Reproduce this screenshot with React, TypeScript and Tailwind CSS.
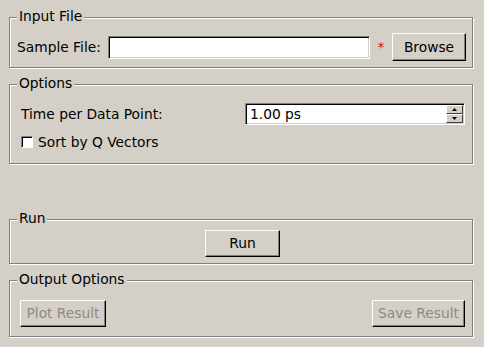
import type { ReactNode } from "react";

// etched group box, title sits on the top line
function Group({
  title,
  className,
  children,
}: {
  title: string;
  className?: string;
  children: ReactNode;
}) {
  return (
    <div
      className={
        "relative w-[464px] border border-[#808080] shadow-[inset_1px_1px_0_#fff,1px_1px_0_#fff] " +
        (className ?? "")
      }
    >
      <span className="absolute left-[7px] top-[-9px] bg-[#d4d0c8] px-[2px] leading-[15px]">
        {title}
      </span>
      {children}
    </div>
  );
}

function Btn({
  label,
  width,
  height = "h-[27px]",
  disabled,
}: {
  label: string;
  width: string;
  height?: string;
  disabled?: boolean;
}) {
  return (
    <button
      className={
        "flex items-center justify-center border border-t-white border-l-white border-b-black border-r-black bg-[#d4d0c8] shadow-[inset_-1px_-1px_0_#808080] " +
        width +
        " " +
        height +
        (disabled ? " text-[#8d8a85]" : " text-black")
      }
    >
      {label}
    </button>
  );
}

function Arrow({ up }: { up?: boolean }) {
  return (
    <div className="flex h-[9px] w-[17px] items-center justify-center border border-t-white border-l-white border-b-[#404040] border-r-[#404040] bg-[#d4d0c8]">
      <svg width="5" height="3" viewBox="0 0 5 3">
        {up ? (
          <polygon points="2.5,0 5,3 0,3" fill="#000" />
        ) : (
          <polygon points="0,0 5,0 2.5,3" fill="#000" />
        )}
      </svg>
    </div>
  );
}

export default function App() {
  return (
    <div className="flex h-[347px] w-[484px] flex-col bg-[#d4d0c8] pl-[9px] pt-[17px] font-['DejaVu_Sans',sans-serif] text-[13.8px] text-black">
      <Group title="Input File" className="pt-[15px] pb-[6px] pl-[7px] pr-[6px]">
        <div className="flex h-[28px] items-center">
          <span className="w-[91px]">Sample File:</span>
          <div className="h-[23px] w-[262px] border border-t-[#808080] border-l-[#808080] border-b-white border-r-white bg-white shadow-[inset_1px_1px_0_#000,inset_-1px_-1px_0_#d4d0c8]" />
          <span className="flex w-[22px] justify-center text-[#cc1111]">*</span>
          <Btn label="Browse" width="w-[74px]" height="h-[28px]" />
        </div>
      </Group>

      <Group title="Options" className="mt-[16px] pt-[18px] pb-[10px] pl-[11px] pr-[7px]">
        <div className="flex h-[22px] items-center justify-between">
          <span>Time per Data Point:</span>
          <div className="flex h-[22px] w-[220px] items-center justify-between border border-t-[#808080] border-l-[#808080] border-b-white border-r-white bg-white pl-[4px] shadow-[inset_1px_1px_0_#000,inset_-1px_-1px_0_#d4d0c8]">
            <span>1.00 ps</span>
            <div className="mr-[1px] flex flex-col">
              <Arrow up />
              <Arrow />
            </div>
          </div>
        </div>
        <div className="mt-[6px] flex h-[22px] items-center">
          <div className="h-[12px] w-[12px] border border-t-[#808080] border-l-[#808080] border-b-white border-r-white bg-white shadow-[inset_1px_1px_0_#000]" />
          <span className="ml-[5px]">Sort by Q Vectors</span>
        </div>
      </Group>

      <Group title="Run" className="mt-[55px] flex justify-center pt-[10px] pb-[6px] pl-[3px]">
        <Btn label="Run" width="w-[75px]" />
      </Group>

      <Group title="Output Options" className="mt-[16px] flex justify-between pt-[19px] pb-[9px] pl-[10px] pr-[7px]">
        <Btn label="Plot Result" width="w-[86px]" disabled />
        <Btn label="Save Result" width="w-[93px]" disabled />
      </Group>
    </div>
  );
}
